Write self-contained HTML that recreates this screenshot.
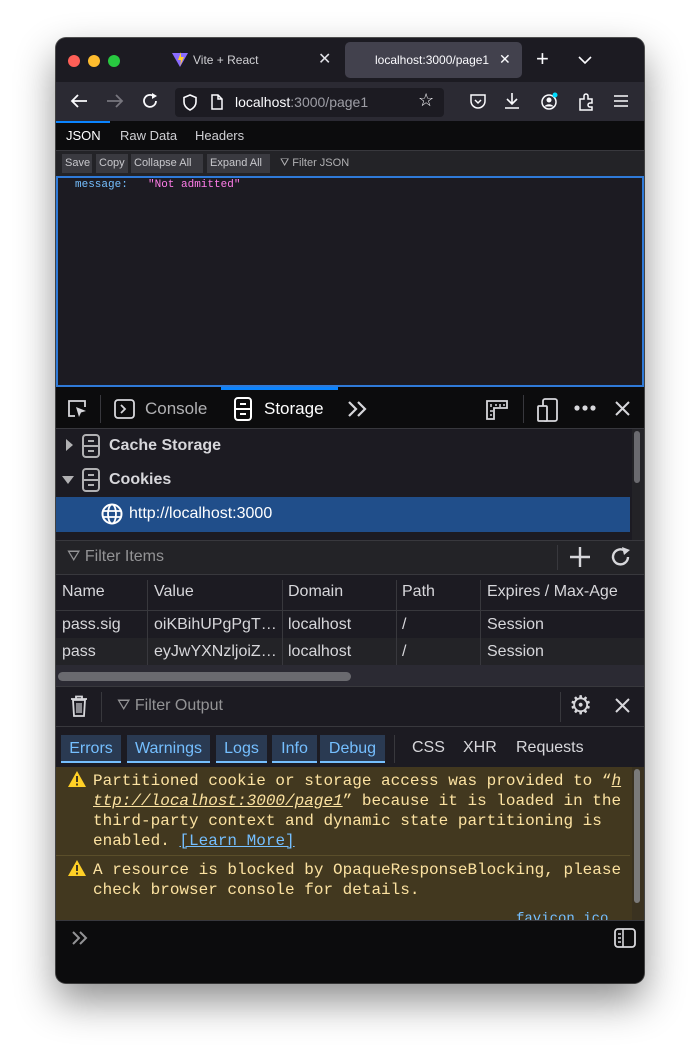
<!DOCTYPE html>
<html><head><meta charset="utf-8"><style>
*{margin:0;padding:0;box-sizing:border-box}
body{width:700px;height:1058px;background:#fff;font-family:"Liberation Sans",sans-serif;position:relative;overflow:hidden}
.win{position:absolute;left:56px;top:38px;width:588px;height:945px;border-radius:10px;overflow:hidden;background:#1c1b22;box-shadow:0 18px 40px rgba(0,0,0,.45),0 0 0 1px #555}
.a{position:absolute}
.t{position:absolute;white-space:nowrap}
.mono{font-family:"Liberation Mono",monospace}
svg{position:absolute;overflow:visible}
.fb{position:absolute;top:697px;height:28px;background:#2a3a52;border-bottom:2px solid #75bfff;color:#75bfff;font-size:16px;text-align:center;line-height:27px}
</style></head><body>
<div class="win">
<!-- tab bar -->
<div class="a" style="left:0;top:0;width:588px;height:44px;background:#1c1b22"></div>
<div class="a" style="left:12px;top:17px;width:12px;height:12px;border-radius:50%;background:#fe5f57"></div>
<div class="a" style="left:32px;top:17px;width:12px;height:12px;border-radius:50%;background:#febc2e"></div>
<div class="a" style="left:52px;top:17px;width:12px;height:12px;border-radius:50%;background:#28c840"></div>
<svg style="left:116px;top:14px" width="16" height="16"><path d="M0 1 L8 15 L16 1 Z" fill="#8a6cff"/><path d="M9 0 L6 8 H9 L8 14 L12 5 H9 Z" fill="#ffd028"/></svg>
<div class="t" style="left:137px;top:15px;font-size:12px;color:#d0d0d4">Vite + React</div>
<div class="t" style="left:262px;top:11px;font-size:16px;color:#e0e0e6">✕</div>
<div class="a" style="left:289px;top:4px;width:177px;height:36px;background:#42414d;border-radius:5px"></div>
<div class="t" style="left:319px;top:15px;font-size:12px;color:#fbfbfe">localhost:3000/page1</div>
<div class="t" style="left:443px;top:13px;font-size:14px;color:#fbfbfe">✕</div>
<div class="t" style="left:480px;top:8px;font-size:22px;color:#fbfbfe;font-weight:300">+</div>
<svg style="left:522px;top:18px" width="14" height="8"><path d="M1 1 L7 7 L13 1" stroke="#fbfbfe" stroke-width="1.6" fill="none"/></svg>
<!-- nav -->
<div class="a" style="left:0;top:44px;width:588px;height:39px;background:#2b2a33"></div>
<svg style="left:14px;top:56px" width="18" height="14"><path d="M17 7 H2 M8 1 L2 7 L8 13" stroke="#fbfbfe" stroke-width="1.8" fill="none"/></svg>
<svg style="left:50px;top:56px" width="18" height="14"><path d="M1 7 H16 M10 1 L16 7 L10 13" stroke="#77767e" stroke-width="1.8" fill="none"/></svg>
<svg style="left:87px;top:55px" width="16" height="16"><path d="M13 8 A6 6 0 1 1 10.5 3" stroke="#fbfbfe" stroke-width="1.8" fill="none"/><path d="M9 0 L14 3 L9 6 Z" fill="#fbfbfe"/></svg>
<div class="a" style="left:119px;top:50px;width:269px;height:29px;background:#1c1b22;border-radius:4px"></div>
<svg style="left:127px;top:56px" width="14" height="17"><path d="M7 1 L13 3.5 V8 C13 12 10 14.5 7 16 C4 14.5 1 12 1 8 V3.5 Z" stroke="#fbfbfe" stroke-width="1.6" fill="none"/></svg>
<svg style="left:155px;top:56px" width="12" height="16"><path d="M1 1 H7 L11 5 V15 H1 Z M7 1 V5 H11" stroke="#fbfbfe" stroke-width="1.5" fill="none"/></svg>
<div class="t" style="left:179px;top:56px;font-size:14px;color:#fbfbfe">localhost<span style="color:#9e9ea6">:3000/page1</span></div>
<div class="t" style="left:362px;top:52px;font-size:18px;color:#fbfbfe">☆</div>
<svg style="left:414px;top:56px" width="16" height="15"><path d="M1 1 H15 V7 A7 7 0 0 1 1 7 Z" stroke="#fbfbfe" stroke-width="1.5" fill="none"/><path d="M5 6 L8 9 L11 6" stroke="#fbfbfe" stroke-width="1.5" fill="none"/></svg>
<svg style="left:448px;top:54px" width="16" height="18"><path d="M8 1 V12 M3 7 L8 12 L13 7 M1 16 H15" stroke="#fbfbfe" stroke-width="1.6" fill="none"/></svg>
<svg style="left:485px;top:55px" width="18" height="18"><circle cx="8" cy="9" r="7" stroke="#fbfbfe" stroke-width="1.5" fill="none"/><circle cx="8" cy="7" r="2.5" fill="#fbfbfe"/><path d="M3.5 13.5 C5 10.5 11 10.5 12.5 13.5" fill="#fbfbfe"/><circle cx="14" cy="2" r="2.5" fill="#0df"/></svg>
<svg style="left:522px;top:55px" width="16" height="18"><path d="M2 6 H6 V3 A2 2 0 0 1 10 3 V6 H14 V10 H12 A2 2 0 0 0 12 14 H14 V17 H2 Z" stroke="#fbfbfe" stroke-width="1.5" fill="none"/></svg>
<svg style="left:558px;top:57px" width="14" height="12"><path d="M0 1 H14 M0 6 H14 M0 11 H14" stroke="#fbfbfe" stroke-width="1.6"/></svg>
<!-- json tabs -->
<div class="a" style="left:0;top:83px;width:588px;height:29px;background:#0c0c0d"></div>
<div class="a" style="left:0;top:83px;width:54px;height:2px;background:#0a84ff"></div>
<div class="t" style="left:10px;top:90px;font-size:13px;color:#fff">JSON</div>
<div class="t" style="left:64px;top:90px;font-size:13px;color:#d0d0d4">Raw Data</div>
<div class="t" style="left:139px;top:90px;font-size:13px;color:#d0d0d4">Headers</div>
<div class="a" style="left:0;top:112px;width:588px;height:26px;background:#232327;border-top:1px solid #38383d"></div>
<div class="a" style="left:6px;top:116px;width:30px;height:19px;background:#3a3a40"></div>
<div class="t" style="left:9px;top:119px;font-size:11px;color:#c8c8cc">Save</div>
<div class="a" style="left:40px;top:116px;width:32px;height:19px;background:#3a3a40"></div>
<div class="t" style="left:43px;top:119px;font-size:11px;color:#c8c8cc">Copy</div>
<div class="a" style="left:75px;top:116px;width:72px;height:19px;background:#3a3a40"></div>
<div class="t" style="left:78px;top:119px;font-size:11px;color:#c8c8cc">Collapse All</div>
<div class="a" style="left:151px;top:116px;width:63px;height:19px;background:#3a3a40"></div>
<div class="t" style="left:154px;top:119px;font-size:11px;color:#c8c8cc">Expand All</div>
<div class="t" style="left:224px;top:119px;font-size:11px;color:#b1b1b3">⛛ Filter JSON</div>
<!-- json panel -->
<div class="a" style="left:0;top:138px;width:588px;height:211px;background:#1c1b22;border:2px solid #2f7ad8"></div>
<div class="t mono" style="left:19px;top:141px;font-size:11px;color:#75bfff">message:</div>
<div class="t mono" style="left:92px;top:141px;font-size:11px;color:#ff7de9">"Not admitted"</div>
<!-- devtools tabs -->
<div class="a" style="left:0;top:349px;width:588px;height:42px;background:#0c0c0d;border-bottom:1px solid #38383d"></div>
<div class="a" style="left:165px;top:349px;width:117px;height:3px;background:#0a84ff"></div>
<svg style="left:11px;top:361px" width="22" height="20"><path d="M8 17 H2 V2 H18 V8" stroke="#d7d7db" stroke-width="1.8" fill="none"/><path d="M9 8 L19 12 L14 13.5 L12 18 Z" fill="#d7d7db"/></svg>
<div class="a" style="left:44px;top:357px;width:1px;height:28px;background:#38383d"></div>
<svg style="left:58px;top:361px" width="21" height="20"><rect x="1" y="1" width="19" height="18" rx="3" stroke="#d7d7db" stroke-width="1.8" fill="none"/><path d="M7 6 L11 10 L7 14" stroke="#d7d7db" stroke-width="1.8" fill="none"/></svg>
<div class="t" style="left:89px;top:361px;font-size:17px;color:#b1b1b3">Console</div>
<svg style="left:178px;top:359px" width="18" height="24"><rect x="1" y="1" width="16" height="22" rx="3" stroke="#fff" stroke-width="2" fill="none"/><path d="M1 12 H17 M6 7 H12 M6 17 H12" stroke="#fff" stroke-width="2"/></svg>
<div class="t" style="left:208px;top:361px;font-size:17px;color:#fff">Storage</div>
<svg style="left:292px;top:363px" width="20" height="16"><path d="M1 1 L8 8 L1 15 M10 1 L17 8 L10 15" stroke="#d7d7db" stroke-width="2.2" fill="none"/></svg>
<svg style="left:430px;top:362px" width="22" height="20"><path d="M1 1 H21 V8 H8 V19 H1 Z" stroke="#d7d7db" stroke-width="1.8" fill="none"/><path d="M5 4 V7 M10 4 V6 M14 4 V7 M18 4 V6 M4 11 H7 M4 15 H6" stroke="#d7d7db" stroke-width="1.5"/></svg>
<div class="a" style="left:467px;top:357px;width:1px;height:28px;background:#38383d"></div>
<svg style="left:481px;top:360px" width="22" height="24"><rect x="6" y="1" width="14" height="22" rx="2" stroke="#d7d7db" stroke-width="1.8" fill="none"/><rect x="1" y="8" width="9" height="15" rx="1" stroke="#d7d7db" stroke-width="1.8" fill="#0c0c0d"/></svg>
<svg style="left:518px;top:367px" width="22" height="6"><circle cx="3" cy="3" r="2.6" fill="#d7d7db"/><circle cx="11" cy="3" r="2.6" fill="#d7d7db"/><circle cx="19" cy="3" r="2.6" fill="#d7d7db"/></svg>
<svg style="left:559px;top:363px" width="15" height="15"><path d="M1 1 L14 14 M14 1 L1 14" stroke="#d7d7db" stroke-width="2"/></svg>
<!-- tree -->
<div class="a" style="left:0;top:391px;width:588px;height:111px;background:#1c1b22"></div>
<div class="a" style="left:576px;top:391px;width:12px;height:111px;background:#232327"></div>
<div class="a" style="left:578px;top:393px;width:6px;height:52px;border-radius:3px;background:#6a6a6f"></div>
<svg style="left:10px;top:401px" width="8" height="12"><path d="M0 0 L7 6 L0 12 Z" fill="#b1b1b3"/></svg>
<svg style="left:26px;top:396px" width="18" height="24"><rect x="1" y="1" width="16" height="22" rx="3" stroke="#b1b1b3" stroke-width="2" fill="none"/><path d="M1 12 H17 M6 7 H12 M6 17 H12" stroke="#b1b1b3" stroke-width="2"/></svg>
<div class="t" style="left:53px;top:399px;font-size:16px;font-weight:bold;color:#d7d7db">Cache Storage</div>
<svg style="left:6px;top:438px" width="12" height="8"><path d="M0 0 L12 0 L6 8 Z" fill="#b1b1b3"/></svg>
<svg style="left:26px;top:430px" width="18" height="24"><rect x="1" y="1" width="16" height="22" rx="3" stroke="#b1b1b3" stroke-width="2" fill="none"/><path d="M1 12 H17 M6 7 H12 M6 17 H12" stroke="#b1b1b3" stroke-width="2"/></svg>
<div class="t" style="left:53px;top:433px;font-size:16px;font-weight:bold;color:#d7d7db">Cookies</div>
<div class="a" style="left:0;top:459px;width:574px;height:35px;background:#204e8a"></div>
<svg style="left:45px;top:465px" width="22" height="22"><circle cx="11" cy="11" r="9.5" stroke="#fff" stroke-width="2" fill="none"/><ellipse cx="11" cy="11" rx="4" ry="9.5" stroke="#fff" stroke-width="1.8" fill="none"/><path d="M2 8 H20 M2 14 H20" stroke="#fff" stroke-width="1.8"/></svg>
<div class="t" style="left:73px;top:467px;font-size:16px;color:#fff">http://localhost:3000</div>
<!-- filter -->
<div class="a" style="left:0;top:502px;width:588px;height:35px;background:#232327;border-top:1px solid #38383d;border-bottom:1px solid #38383d"></div>
<div class="t" style="left:11px;top:510px;font-size:16px;color:#939395">⛛ Filter Items</div>
<div class="a" style="left:501px;top:507px;width:1px;height:25px;background:#38383d"></div>
<svg style="left:514px;top:509px" width="20" height="20"><path d="M10 0 V20 M0 10 H20" stroke="#d7d7db" stroke-width="2.4"/></svg>
<svg style="left:555px;top:509px" width="20" height="20"><path d="M17 10 A7.5 7.5 0 1 1 13.5 3.5" stroke="#d7d7db" stroke-width="2.4" fill="none"/><path d="M11 0 L19 3 L13 8 Z" fill="#d7d7db"/></svg>
<!-- table -->
<div class="a" style="left:0;top:537px;width:588px;height:36px;background:#1c1b22;border-bottom:1px solid #38383d"></div>
<div class="a" style="left:0;top:573px;width:588px;height:27px;background:#1c1b22"></div>
<div class="a" style="left:0;top:600px;width:588px;height:27px;background:#232327"></div>
<div class="a" style="left:91px;top:542px;width:1px;height:85px;background:#38383d"></div>
<div class="a" style="left:226px;top:542px;width:1px;height:85px;background:#38383d"></div>
<div class="a" style="left:340px;top:542px;width:1px;height:85px;background:#38383d"></div>
<div class="a" style="left:424px;top:542px;width:1px;height:85px;background:#38383d"></div>
<div class="t" style="left:6px;top:545px;font-size:16px;color:#d7d7db">Name</div>
<div class="t" style="left:98px;top:545px;font-size:16px;color:#d7d7db">Value</div>
<div class="t" style="left:232px;top:545px;font-size:16px;color:#d7d7db">Domain</div>
<div class="t" style="left:346px;top:545px;font-size:16px;color:#d7d7db">Path</div>
<div class="t" style="left:431px;top:545px;font-size:16px;color:#d7d7db">Expires / Max-Age</div>
<div class="t" style="left:6px;top:578px;font-size:16px;color:#d7d7db">pass.sig</div>
<div class="t" style="left:98px;top:578px;font-size:16px;color:#d7d7db">oiKBihUPgPgT…</div>
<div class="t" style="left:232px;top:578px;font-size:16px;color:#d7d7db">localhost</div>
<div class="t" style="left:346px;top:578px;font-size:16px;color:#d7d7db">/</div>
<div class="t" style="left:431px;top:578px;font-size:16px;color:#d7d7db">Session</div>
<div class="t" style="left:6px;top:605px;font-size:16px;color:#d7d7db">pass</div>
<div class="t" style="left:98px;top:605px;font-size:16px;color:#d7d7db">eyJwYXNzljoiZ…</div>
<div class="t" style="left:232px;top:605px;font-size:16px;color:#d7d7db">localhost</div>
<div class="t" style="left:346px;top:605px;font-size:16px;color:#d7d7db">/</div>
<div class="t" style="left:431px;top:605px;font-size:16px;color:#d7d7db">Session</div>
<div class="a" style="left:0;top:627px;width:588px;height:21px;background:#2b2a33"></div>
<div class="a" style="left:2px;top:634px;width:293px;height:9px;border-radius:5px;background:#6a6a6f"></div>
<!-- console toolbar -->
<div class="a" style="left:0;top:648px;width:588px;height:41px;background:#1c1b22;border-top:1px solid #38383d;border-bottom:1px solid #38383d"></div>
<svg style="left:14px;top:657px" width="18" height="22"><path d="M1 4 H17 M6 4 V1.5 H12 V4" stroke="#d7d7db" stroke-width="1.8" fill="none"/><path d="M3 5 H15 L14 21 H4 Z" stroke="#d7d7db" stroke-width="1.8" fill="none"/><path d="M7 8 V18 M9 8 V18 M11 8 V18" stroke="#d7d7db" stroke-width="1.2"/></svg>
<div class="a" style="left:45px;top:654px;width:1px;height:30px;background:#38383d"></div>
<div class="t" style="left:61px;top:659px;font-size:16px;color:#939395">⛛ Filter Output</div>
<div class="a" style="left:504px;top:654px;width:1px;height:30px;background:#38383d"></div>
<div class="t" style="left:513px;top:652px;font-size:26px;color:#d7d7db">⚙</div>
<svg style="left:559px;top:660px" width="15" height="15"><path d="M1 1 L14 14 M14 1 L1 14" stroke="#d7d7db" stroke-width="2"/></svg>
<!-- filter buttons -->
<div class="a" style="left:0;top:689px;width:588px;height:40px;background:#1c1b22"></div>
<div class="fb" style="left:5px;width:60px">Errors</div>
<div class="fb" style="left:71px;width:83px">Warnings</div>
<div class="fb" style="left:160px;width:51px">Logs</div>
<div class="fb" style="left:216px;width:45px">Info</div>
<div class="fb" style="left:264px;width:65px">Debug</div>
<div class="a" style="left:338px;top:697px;width:1px;height:28px;background:#38383d"></div>
<div class="t" style="left:356px;top:701px;font-size:16px;color:#d7d7db">CSS</div>
<div class="t" style="left:407px;top:701px;font-size:16px;color:#d7d7db">XHR</div>
<div class="t" style="left:460px;top:701px;font-size:16px;color:#d7d7db">Requests</div>
<!-- messages -->
<div class="a" style="left:0;top:729px;width:588px;height:153px;background:#42381f"></div>
<div class="a" style="left:576px;top:729px;width:12px;height:153px;background:#3a3220"></div>
<div class="a" style="left:578px;top:731px;width:6px;height:134px;border-radius:3px;background:#7a7a7a"></div>
<div class="a" style="left:0;top:817px;width:574px;height:1px;background:#5a4e2a"></div>
<svg style="left:12px;top:733px" width="18" height="16"><path d="M9 0 L18 16 H0 Z" fill="#ffd026"/><path d="M9 5 V11 M9 12.5 V14.5" stroke="#42381f" stroke-width="2"/></svg>
<div class="t mono" style="left:37px;top:733px;font-size:16px;line-height:20px;color:#fce2a1">Partitioned cookie or storage access was provided to “<i style="text-decoration:underline">h</i><br><i style="text-decoration:underline">ttp://localhost:3000/page1</i>” because it is loaded in the<br>third-party context and dynamic state partitioning is<br>enabled. <span style="color:#75bfff;text-decoration:underline">[Learn More]</span></div>
<svg style="left:12px;top:822px" width="18" height="16"><path d="M9 0 L18 16 H0 Z" fill="#ffd026"/><path d="M9 5 V11 M9 12.5 V14.5" stroke="#42381f" stroke-width="2"/></svg>
<div class="t mono" style="left:37px;top:822px;font-size:16px;line-height:20px;color:#fce2a1">A resource is blocked by OpaqueResponseBlocking, please<br>check browser console for details.</div>
<div class="t mono" style="left:460px;top:873px;font-size:14px;color:#75bfff;height:9px;overflow:hidden">favicon.ico</div>
<!-- input -->
<div class="a" style="left:0;top:882px;width:588px;height:63px;background:#0c0c0d;border-top:1px solid #38383d"></div>
<svg style="left:16px;top:893px" width="16" height="14"><path d="M1 1 L7 7 L1 13 M8 1 L14 7 L8 13" stroke="#939395" stroke-width="2" fill="none"/></svg>
<svg style="left:558px;top:890px" width="22" height="20"><rect x="1" y="1" width="20" height="18" rx="3" stroke="#d7d7db" stroke-width="1.8" fill="none"/><path d="M9 1 V19 M4 6 H7 M4 10 H7 M4 14 H7" stroke="#d7d7db" stroke-width="1.6"/></svg>
</div>
</body></html>
